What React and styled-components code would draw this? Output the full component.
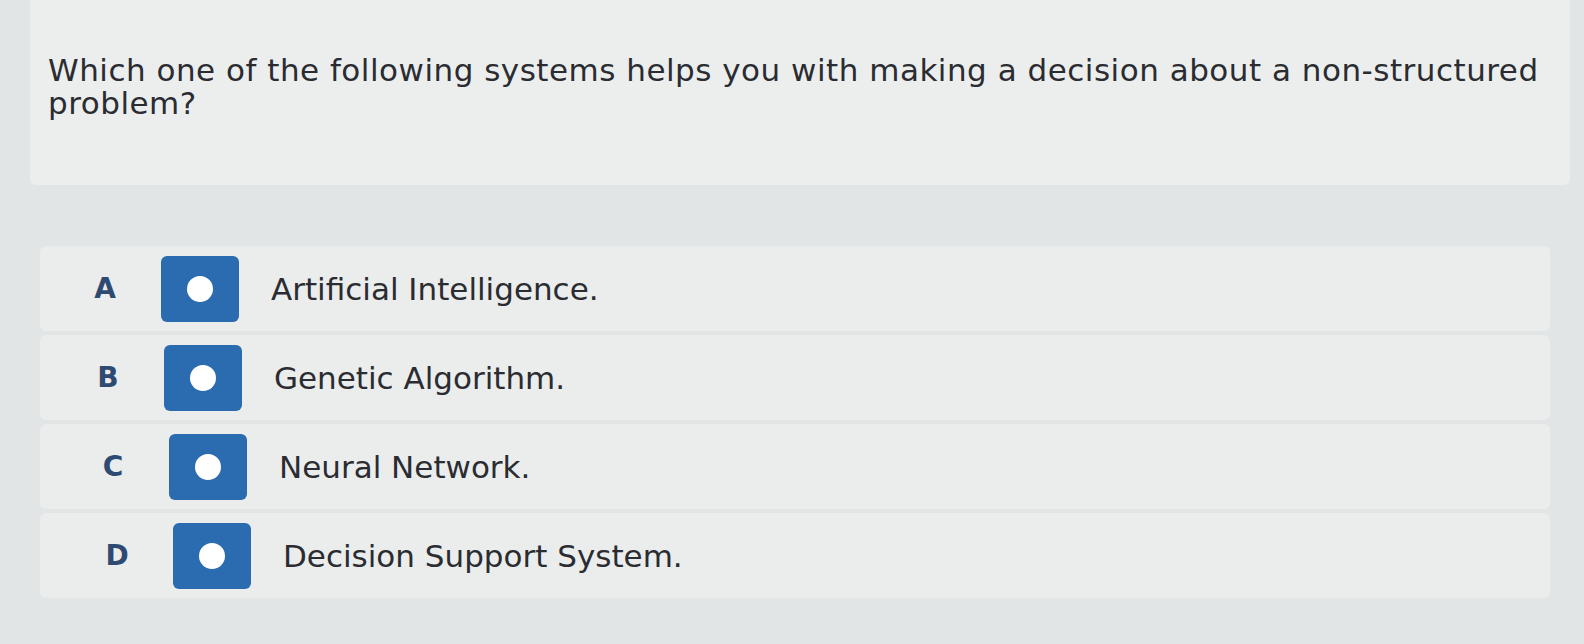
import styled, { createGlobalStyle } from "styled-components";

const GlobalStyle = createGlobalStyle`
  html, body {
    margin: 0;
    padding: 0;
    background: #e2e5e6;
  }
  body {
    font-family: "DejaVu Sans", Verdana, sans-serif;
  }
`;

const options = [
    { letter: "A", text: "Artificial Intelligence.", shift: 0 },
    { letter: "B", text: "Genetic Algorithm.", shift: 3 },
    { letter: "C", text: "Neural Network.", shift: 8 },
    { letter: "D", text: "Decision Support System.", shift: 12 },
];

export default function App() {
    return (
        <Page>
            <GlobalStyle />
            <QuestionCard>
                <QuestionText>
                    Which one of the following systems helps you with making a decision about a non-structured problem?
                </QuestionText>
            </QuestionCard>

            <OptionList>
                {options.map((o) => (
                    <OptionRow key={o.letter} $shift={o.shift}>
                        <Letter>{o.letter}</Letter>
                        <RadioBox>
                            <Dot />
                        </RadioBox>
                        <OptionText>{o.text}</OptionText>
                    </OptionRow>
                ))}
            </OptionList>
        </Page>
    );
}

const Page = styled.div`
    width: 1584px;
    height: 644px;
    overflow: hidden;
    display: flex;
    flex-direction: column;
    background: #e2e5e6;
`;

const QuestionCard = styled.div`
    margin: 0 14px 0 30px;
    height: 185px;
    box-sizing: border-box;
    padding: 54px 18px 0 18px;
    background: #eceeee;
    border-radius: 0 0 6px 6px;
`;

const QuestionText = styled.div`
    max-width: 1510px;
    font-size: 31px;
    line-height: 33px;
    color: #2a2c31;
    letter-spacing: 0.5px;
`;

const OptionList = styled.div`
    margin: 61px 34px 0 40px;
    display: flex;
    flex-direction: column;
    gap: 4px;
`;

const OptionRow = styled.div`
    height: 85px;
    display: flex;
    align-items: center;
    padding-left: ${(p) => 50 + p.$shift}px;
    background: #ebeded;
    border-radius: 6px;
`;

const Letter = styled.div`
    width: 30px;
    text-align: center;
    font-size: 28px;
    font-weight: bold;
    color: #2e4a72;
`;

const RadioBox = styled.div`
    margin-left: 41px;
    width: 78px;
    height: 66px;
    border-radius: 6px;
    background: #2b6cb0;
    display: flex;
    align-items: center;
    justify-content: center;
`;

const Dot = styled.div`
    width: 26px;
    height: 26px;
    border-radius: 50%;
    background: #ffffff;
`;

const OptionText = styled.div`
    margin-left: 32px;
    font-size: 31px;
    color: #2a2c31;
`;
